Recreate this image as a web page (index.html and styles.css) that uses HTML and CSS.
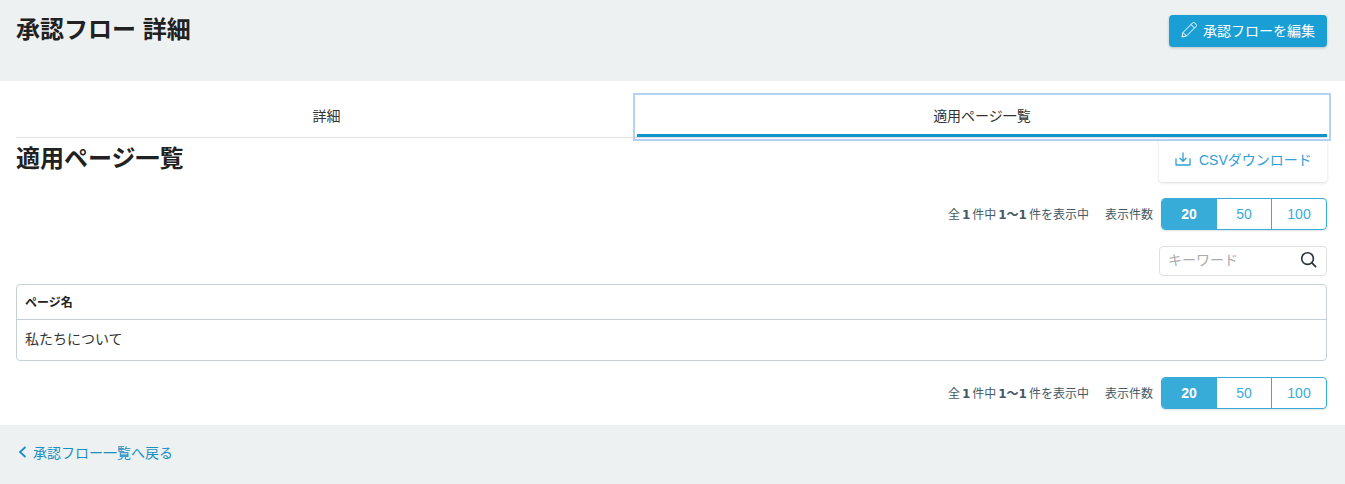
FILE: index.html
```html
<!DOCTYPE html>
<html lang="ja">
<head>
  <meta charset="UTF-8" />
  <meta name="viewport" content="width=device-width, initial-scale=1.0" />
  <title>承認フロー 詳細</title>
  <link rel="stylesheet" href="styles.css">
</head>
<body>

  <header class="page-head">
    <h1>承認フロー 詳細</h1>
    <a class="btn-edit" href="#">
      <svg width="16" height="16" viewBox="0 0 16 16" fill="none" stroke="currentColor" stroke-width="1" stroke-linejoin="round">
        <path d="M1 15l1-4.500L11.500 1a1.600 1.600 0 0 1 2.200 0l1.300 1.300a1.600 1.600 0 0 1 0 2.200L5.500 14z" />
        <path d="M2 10.500l3.500 3.500M10 2.500l3.500 3.500" />
      </svg>
      承認フローを編集
    </a>
  </header>

  <main class="content">
    <nav class="tabs">
      <a class="tab" href="#">詳細</a>
      <a class="tab tab-active" href="#">適用ページ一覧</a>
    </nav>

    <div class="section-head">
      <h2>適用ページ一覧</h2>
      <a class="btn-csv" href="#">
        <svg width="16" height="14" viewBox="0 0 16 14" fill="none" stroke="currentColor" stroke-width="1.300" stroke-linecap="round" stroke-linejoin="round">
          <path d="M8 1v8M5 6.200L8 9.200 11 6.200" />
          <path d="M1 7v6h14V7" />
        </svg>
        CSVダウンロード
      </a>
    </div>

    <div class="pager">
      <span class="pager-info">全<b>1</b>件中<b>1〜1</b>件を表示中</span>
      <span class="pager-label">表示件数</span>
      <div class="per-page">
        <a class="per-page-item is-current" href="#">20</a>
        <a class="per-page-item" href="#">50</a>
        <a class="per-page-item" href="#">100</a>
      </div>
    </div>

    <div class="search-row">
      <div class="search">
        <input type="text" placeholder="キーワード" />
        <svg width="17" height="17" viewBox="0 0 18 18" fill="none" stroke="#263238" stroke-width="1.700" stroke-linecap="round">
          <circle cx="8" cy="8" r="6.200" />
          <path d="M12.600 12.600L16.500 16.500" />
        </svg>
      </div>
    </div>

    <div class="table-wrap">
      <table>
        <thead>
          <tr><th>ページ名</th></tr>
        </thead>
        <tbody>
          <tr><td>私たちについて</td></tr>
        </tbody>
      </table>
    </div>

    <div class="pager">
      <span class="pager-info">全<b>1</b>件中<b>1〜1</b>件を表示中</span>
      <span class="pager-label">表示件数</span>
      <div class="per-page">
        <a class="per-page-item is-current" href="#">20</a>
        <a class="per-page-item" href="#">50</a>
        <a class="per-page-item" href="#">100</a>
      </div>
    </div>
  </main>

  <footer class="page-foot">
    <a class="back-link" href="#">
      <svg width="9" height="12" viewBox="0 0 9 12" fill="none" stroke="currentColor" stroke-width="1.800">
        <path d="M7.500 1L2 6l5.500 5" />
      </svg>
      承認フロー一覧へ戻る
    </a>
  </footer>

</body>
</html>
```

FILE: styles.css
```css
* {
  box-sizing: border-box;
}
body {
  font-family: "Liberation Sans", "Noto Sans CJK JP", sans-serif;
  margin: 0;
  padding: 0;
  background: #fff;
  color: #263238;
  font-size: 14px;
}
a {
  text-decoration: none;
}
svg {
  flex: none;
}
.page-head {
  background: #edf1f2;
  height: 81px;
  padding: 15px 18px 0 16px;
  display: flex;
  justify-content: space-between;
  align-items: flex-start;
}
h1,
h2 {
  margin: 0;
  font-size: 24px;
  font-weight: bold;
  line-height: 26px;
  color: #212121;
}
h1 {
  margin-top: 2px;
}
.btn-edit {
  display: flex;
  align-items: center;
  gap: 6px;
  height: 32px;
  padding: 0 12px 2px;
  background: #1a9fd4;
  color: #fff;
  border-radius: 4px;
  box-shadow: 0 1px 3px rgba(0,0,0,0.2);
}
.content {
  padding: 16px 18px 16px 16px;
}
.tabs {
  display: grid;
  grid-template-columns: 9fr 10fr;
  height: 41px;
  border-bottom: 1px solid #dfe1e2;
}
.tab {
  display: flex;
  align-items: center;
  justify-content: center;
  height: 40px;
  padding-bottom: 5px;
  color: #333;
}
.tab-active {
  padding-bottom: 2px;
  border-bottom: 3px solid #0f95c9;
  outline: 2px solid #b3d2f3;
  outline-offset: 2px;
  position: relative;
}
.section-head {
  display: flex;
  justify-content: space-between;
  height: 44px;
  margin-bottom: 16px;
}
.section-head h2 {
  margin-top: 8px;
}
.btn-csv {
  display: flex;
  align-items: center;
  gap: 8px;
  width: 168px;
  padding: 0 0 2px 16px;
  white-space: nowrap;
  color: #2ea0d6;
  background: #fff;
  border-radius: 4px;
  box-shadow: 0 1px 3px rgba(0,0,0,0.15);
}
.pager {
  display: flex;
  justify-content: flex-end;
  align-items: center;
  height: 32px;
  font-size: 12px;
  color: #455a64;
}
.pager-info,
.pager-label {
  padding-bottom: 2px;
}
.pager-info b {
  margin: 0 2px;
  font-family: "DejaVu Sans", "Noto Sans CJK JP", sans-serif;
}
.pager-label {
  margin: 0 8px 0 16px;
}
.per-page {
  display: grid;
  grid-template-columns: 54px 55px 55px;
  height: 32px;
  border: 1px solid #37acd9;
  border-radius: 4px;
  box-shadow: 0 1px 2px rgba(0,0,0,0.12);
  overflow: hidden;
}
.per-page-item {
  display: flex;
  align-items: center;
  justify-content: center;
  font-size: 14px;
  color: #37acd9;
  border-left: 1px solid #37acd9;
}
.per-page-item:first-child {
  border-left: none;
}
.per-page-item.is-current {
  background: #37acd9;
  color: #fff;
  font-weight: bold;
}
.search-row {
  display: flex;
  justify-content: flex-end;
  margin: 16px 0 8px;
}
.search {
  display: flex;
  align-items: center;
  width: 168px;
  height: 30px;
  padding: 0 9px 3px 8px;
  border: 1px solid #e0e0e0;
  border-radius: 4px;
}
.search input {
  flex: 1;
  min-width: 0;
  border: none;
  outline: none;
  padding: 0;
  font: inherit;
}
.search input::placeholder {
  color: #aaa;
}
.table-wrap {
  border: 1px solid #c8d2d6;
  border-radius: 4px;
  margin-bottom: 16px;
}
table {
  width: 100%;
  border-collapse: collapse;
}
th {
  text-align: left;
  height: 34px;
  padding: 0 8px;
  font-size: 12px;
  color: #212121;
  border-bottom: 1px solid #c8d2d6;
}
td {
  height: 41px;
  padding: 0 8px 3px;
  color: #333;
}
.page-foot {
  background: #edf1f2;
  height: 59px;
  padding: 0 18px 5px;
  display: flex;
  align-items: center;
}
.back-link {
  display: flex;
  align-items: center;
  gap: 6px;
  color: #1a8fc2;
}
```
